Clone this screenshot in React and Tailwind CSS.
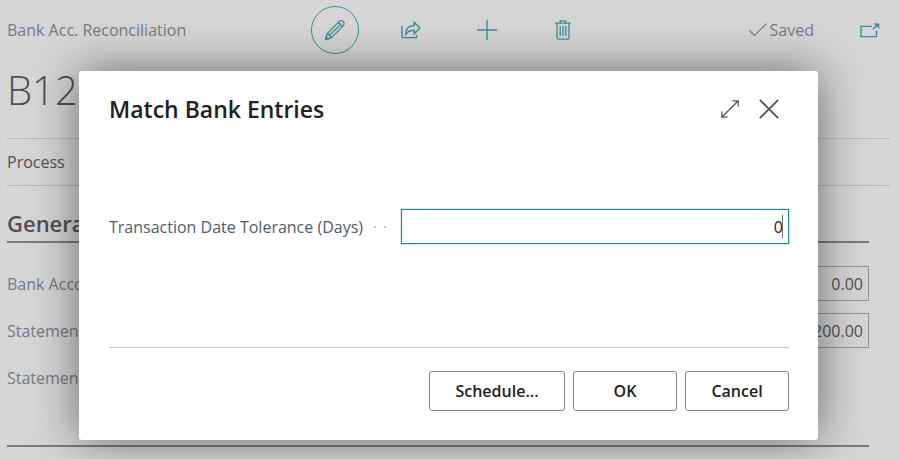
import React from "react";

function PencilIcon() {
  return (
    <svg width="22" height="22" viewBox="0 0 22 22" fill="none" stroke="currentColor" strokeWidth="1.3" strokeLinejoin="round" aria-hidden="true">
      <path d="M1.5 20.5 L3 15 L15 2.6 Q17.2 0.8 19.2 2.6 Q21 4.6 19.3 6.9 L7 19 Z" />
      <path d="M3 15 Q6.4 15.6 7 19 M5.6 16.4 L16 6 M14 3.8 Q17.4 4.4 18.2 8" />
      <path d="M1.5 20.5 L2.2 17.9 L4.1 19.8 Z" fill="currentColor" />
    </svg>
  );
}

function ShareIcon() {
  return (
    <svg width="20" height="18" viewBox="0 0 20 18" fill="none" stroke="currentColor" strokeWidth="1.4" aria-hidden="true">
      <path d="M1 5 V16.6 H15.5 V14" />
      <path d="M4.8 13.2 C4.8 7.6 8 4.6 13.2 4.5 V1.2 L19 6.9 L13.2 12.5 V9.2 C9.5 9.2 6.7 10.2 4.8 13.2 Z" />
    </svg>
  );
}

function PlusIcon() {
  return (
    <svg width="20" height="20" viewBox="0 0 20 20" fill="none" stroke="currentColor" strokeWidth="1.4" aria-hidden="true">
      <path d="M10 0 V20 M0 10 H20" />
    </svg>
  );
}

function TrashIcon() {
  return (
    <svg width="16" height="20" viewBox="0 0 16 20" fill="none" stroke="currentColor" strokeWidth="1.3" aria-hidden="true">
      <path d="M0 3.2 H16 M5.3 3 V0.8 H10.7 V3 M2 3.2 V17.8 Q2 19.2 3.4 19.2 H12.6 Q14 19.2 14 17.8 V3.2" />
      <path d="M5.2 6 V16 M8 6 V16 M10.8 6 V16" />
    </svg>
  );
}

function CheckIcon() {
  return (
    <svg width="18" height="14" viewBox="0 0 18 14" fill="none" stroke="currentColor" strokeWidth="1.2" aria-hidden="true">
      <path d="M0.5 7.5 L5.5 12.5 L17.5 0.6" />
    </svg>
  );
}

function PopOutIcon() {
  return (
    <svg width="20" height="15" viewBox="0 0 20 15" fill="none" stroke="currentColor" strokeWidth="1.4" aria-hidden="true">
      <path d="M12 3.4 H1 V13.6 H16.5 V7.5" />
      <path d="M13 6.2 L17.8 1.4" />
      <path d="M14.3 0.8 H19 V5.4 Z" fill="currentColor" strokeWidth="0.6" />
    </svg>
  );
}

function ExpandIcon() {
  return (
    <svg width="18" height="18" viewBox="0 0 18 18" fill="none" stroke="currentColor" strokeWidth="1.2" aria-hidden="true">
      <path d="M1 17 L17 1 M11.5 0.8 H17.2 V6.5 M0.8 11.5 V17.2 H6.5" />
    </svg>
  );
}

function CloseIcon() {
  return (
    <svg width="20" height="20" viewBox="0 0 20 20" fill="none" stroke="currentColor" strokeWidth="1.7" aria-hidden="true">
      <path d="M0.8 0.8 L19.2 19.2 M19.2 0.8 L0.8 19.2" />
    </svg>
  );
}

function AmountRow({ id, label, value }) {
  return (
    <div className="flex h-[35px] items-center justify-between">
      <label htmlFor={id}>{label}</label>
      {value && (
        <input
          id={id}
          readOnly
          defaultValue={value}
          className="h-[35px] w-[160px] border border-[#92959d] bg-transparent px-[5px] text-right text-[#505050]"
        />
      )}
      {!value && <output id={id} />}
    </div>
  );
}

function Page() {
  return (
    <main className="pl-[7px] pr-[9px] text-[#747b85]">
      <header className="grid h-[60px] grid-cols-[304px_1fr_auto] items-center">
        <span>Bank Acc. Reconciliation</span>
        <div className="flex gap-7 text-[#3b8f93]">
          <button aria-label="Edit" className="flex size-12 items-center justify-center rounded-full border border-[#3b8f93]"><PencilIcon /></button>
          <button aria-label="Share" className="flex size-12 items-center justify-center"><ShareIcon /></button>
          <button aria-label="New" className="flex size-12 items-center justify-center"><PlusIcon /></button>
          <button aria-label="Delete" className="flex size-12 items-center justify-center"><TrashIcon /></button>
        </div>
        <div className="flex items-center pr-[10px]">
          <CheckIcon />
          <span className="ml-[3px]">Saved</span>
          <button aria-label="Open in new window" className="ml-[46px] text-[#3b8f93]"><PopOutIcon /></button>
        </div>
      </header>
      <h1 className="h-[78px] text-[40px] leading-[60px] font-light text-[#505050]">B12</h1>
      <nav className="flex h-12 items-center border-y border-[#bababa] text-[#505050]">
        <button>Process</button>
      </nav>
      <section className="mr-[21px]">
        <h2 className="flex h-[57px] items-end border-b-2 border-[#747b85] pb-1 text-[22px] leading-7 font-semibold text-[#505050]">General</h2>
        <div className="flex flex-col gap-3 border-b-2 border-[#747b85] pt-[23px] pb-[50px]">
          <AmountRow id="account" label="Bank Account" value="0.00" />
          <AmountRow id="statement" label="Statement" value="200.00" />
          <AmountRow id="statement-date" label="Statement" />
        </div>
      </section>
    </main>
  );
}

function DialogButton({ wide, children }) {
  return (
    <button className={`h-10 rounded-[3px] border border-[#8a8886] font-semibold text-[#212121] ${wide ? "w-[136px]" : "w-[104px]"}`}>
      {children}
    </button>
  );
}

function MatchDialog() {
  return (
    <div
      role="dialog"
      aria-labelledby="dialog-title"
      className="absolute top-[71px] right-[81px] left-[79px] rounded-[3px] bg-white pr-[29px] pl-[30px] pt-[22px] pb-[29px] shadow-[0_0_48px_rgba(0,0,0,0.5)]"
    >
      <div className="flex h-8 items-center">
        <h2 id="dialog-title" className="text-[23px] leading-8 font-semibold text-[#212121]">Match Bank Entries</h2>
        <div className="ml-auto flex items-center gap-[20px] pr-[10px] text-[#505050]">
          <button aria-label="Expand"><ExpandIcon /></button>
          <button aria-label="Close"><CloseIcon /></button>
        </div>
      </div>
      <div className="mt-[84px] flex h-[35px] items-center">
        <div className="flex w-[292px] items-center">
          <label htmlFor="tolerance" className="whitespace-nowrap text-[#505c6d]">Transaction Date Tolerance (Days)</label>
          <span className="ml-[11px] flex gap-2" aria-hidden="true">
            <i className="size-[2px] bg-[#c8c8c8]" />
            <i className="size-[2px] bg-[#c8c8c8]" />
          </span>
        </div>
        <div className="relative flex h-[35px] flex-1 border border-[#1a8a8d] shadow-[0_0_1px_#1a8a8d]">
          <input
            id="tolerance"
            defaultValue="0"
            className="w-full bg-white px-[5px] text-right text-[#212121] outline-none"
          />
          <span className="absolute top-[5px] right-[5px] h-[23px] w-px bg-[#707070]" />
        </div>
      </div>
      <div className="mt-[103px] flex justify-end gap-2 border-t border-[#c8c8c8] pt-[23px]">
        <DialogButton wide>Schedule...</DialogButton>
        <DialogButton>OK</DialogButton>
        <DialogButton>Cancel</DialogButton>
      </div>
    </div>
  );
}

export default function App() {
  return (
    <div className="relative min-h-screen overflow-hidden bg-[#d6d6d6] font-['Open_Sans','Noto_Sans',sans-serif] text-[16px] leading-6">
      <Page />
      <MatchDialog />
    </div>
  );
}
